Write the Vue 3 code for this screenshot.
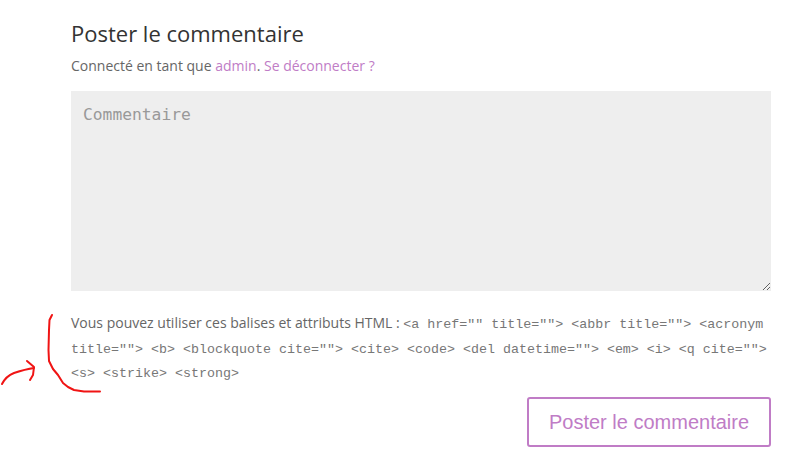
<template>
  <div class="page">
    <h3 class="title">Poster le commentaire</h3>
    <p class="logged">
      Connecté en tant que <a href="#">admin</a>. <a href="#">Se déconnecter ?</a>
    </p>
    <textarea class="comment" placeholder="Commentaire"></textarea>
    <p class="allowed">
      Vous pouvez utiliser ces balises et attributs HTML : <code>{{ tags }}</code>
    </p>
    <div class="actions">
      <button type="button" class="submit">Poster le commentaire</button>
    </div>

    <!-- red marks hand-drawn over the screenshot -->
    <svg class="marks" width="110" height="90" viewBox="0 310 110 90" fill="none" stroke="#f01414" stroke-width="2" stroke-linecap="round" stroke-linejoin="round">
      <path d="M52 315 L49.500 320 L49 330 L48.500 350 L49 361 L53 369 L58 375 L63 383 L68 387 L74 390 L84 391.500 L100 391.500" />
      <path d="M2 384 C5 378 9 375 14 373 C20 371 27 369 34 368" />
      <path d="M27 361 L34 367 L33 375 L30 380" />
    </svg>
  </div>
</template>

<script setup>
const tags = '<a href="" title=""> <abbr title=""> <acronym title=""> <b> <blockquote cite=""> <cite> <code> <del datetime=""> <em> <i> <q cite=""> <s> <strike> <strong>'
</script>

<style scoped>
.page {
  position: relative;
  width: 792px;
  height: 471px;
  box-sizing: border-box;
  padding: 19px 21px 0 71px;
  overflow: hidden;
  background: #fff;
  font-family: "Open Sans", sans-serif;
  font-size: 14px;
  color: #666;
}

.title {
  margin: 0;
  font-size: 22px;
  line-height: 28px;
  font-weight: 400;
  color: #333;
}

.logged {
  margin: 8px 0 0;
  line-height: 22px;
}

.logged a {
  color: #c07cc6;
  text-decoration: none;
}

.comment {
  display: block;
  width: 100%;
  height: 200px;
  margin-top: 14px;
  padding: 13px 12px 12px;
  box-sizing: border-box;
  border: none;
  outline: none;
  background: #eee;
  font-family: "DejaVu Sans Mono", monospace;
  font-size: 16.300px;
  line-height: 22px;
  color: #999;
}

.comment::placeholder {
  color: #999;
}

.allowed {
  margin: 20px 0 0;
  line-height: 24.500px;
}

.allowed code {
  font-family: "Liberation Mono", monospace;
  font-size: 13.330px;
  line-height: 1;
  color: #777;
}

.actions {
  display: flex;
  justify-content: flex-end;
  margin-top: 12px;
}

.submit {
  width: 244px;
  height: 50px;
  padding: 1px 0 0;
  box-sizing: border-box;
  border: 2px solid #c07cc6;
  border-radius: 3px;
  background: #fff;
  font-family: "Liberation Sans", sans-serif;
  font-size: 20px;
  color: #c07cc6;
}

.marks {
  position: absolute;
  left: 0;
  top: 310px;
}
</style>
